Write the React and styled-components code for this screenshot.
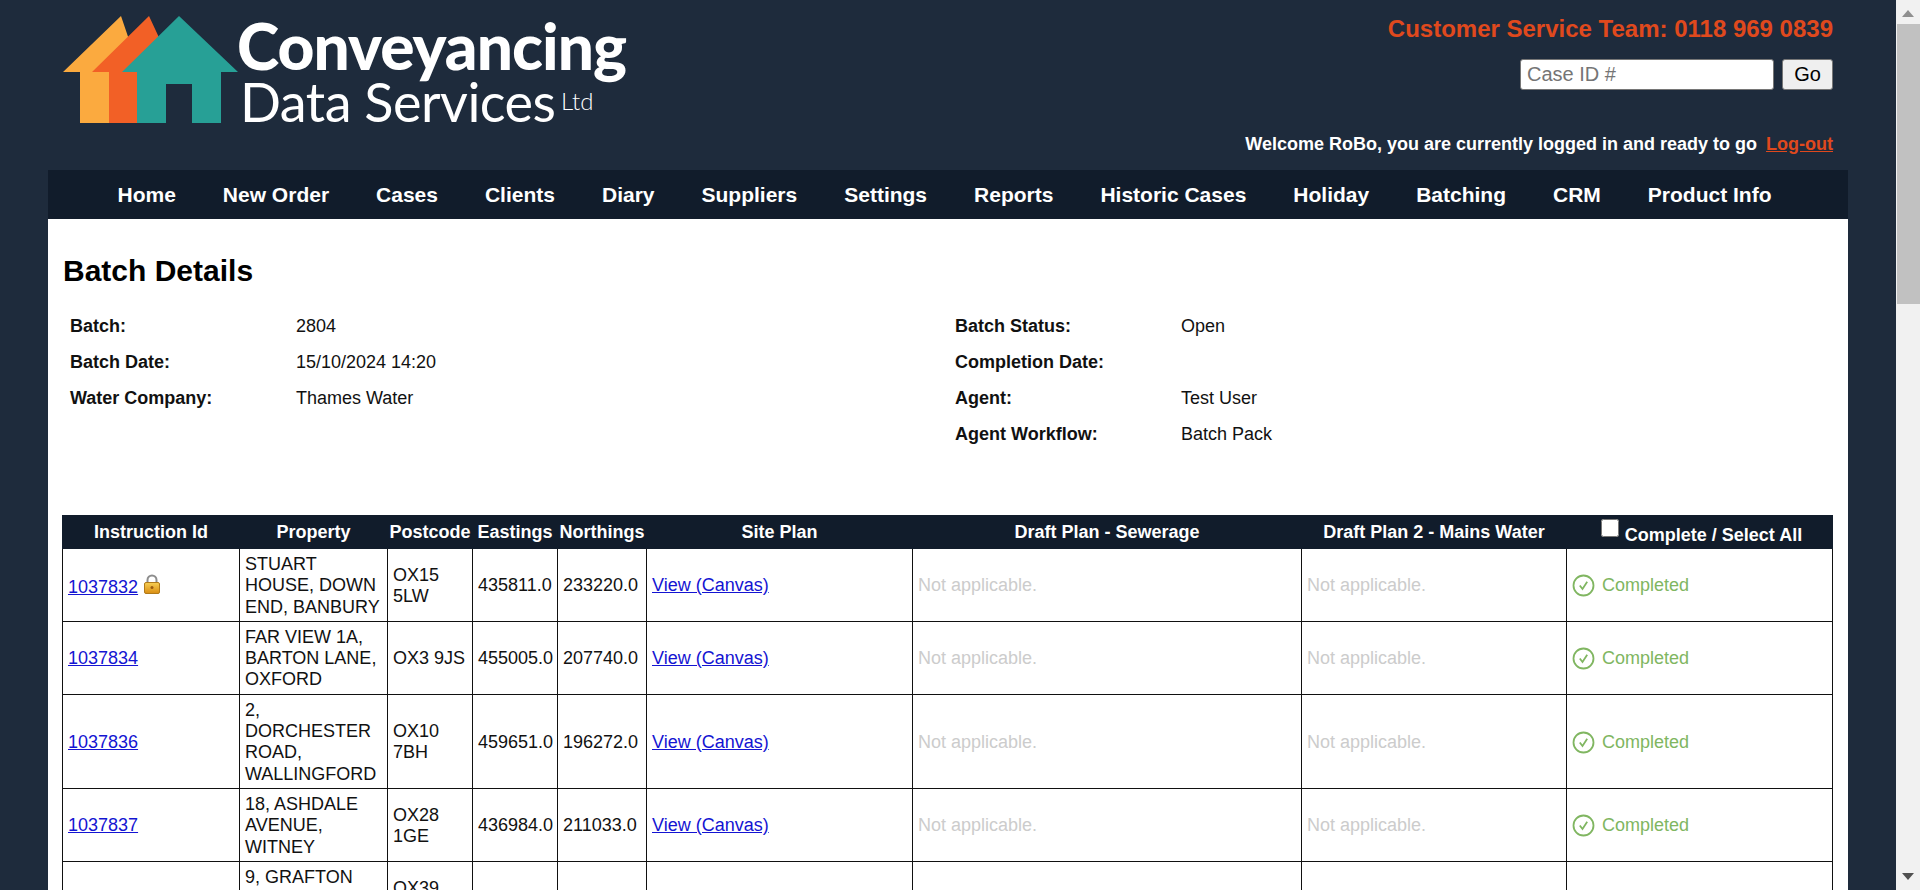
import React from "react";
import styled, { createGlobalStyle } from "styled-components";

const GlobalStyle = createGlobalStyle`
  body {
    margin: 0;
    background-color: #1e2b3c;
    font-family: "Liberation Sans", Arial, sans-serif;
    font-size: 18px;
    color: #111;
  }
`;

const Page = styled.div`
  width: 1800px;
  margin-left: 48px;
`;
const Header = styled.header`
  height: 170px;
  display: flex;
  justify-content: space-between;
  padding-right: 15px;
  box-sizing: border-box;
`;
const Logo = styled.svg`
  display: block;
  width: 580px;
  height: 140px;
  flex: none;
`;
const HeaderRight = styled.div`
  display: flex;
  flex-direction: column;
  align-items: flex-end;
`;
const Phone = styled.div`
  margin-top: 16px;
  font-size: 24px;
  line-height: 26px;
  font-weight: 700;
  color: #e0491d;
`;
const SearchForm = styled.form`
  display: flex;
  gap: 8px;
  margin-top: 17px;
`;
const SearchInput = styled.input`
  box-sizing: border-box;
  width: 254px;
  height: 31px;
  border: 1px solid #767676;
  border-radius: 3px;
  padding: 0 6px;
  font: 20px "Liberation Sans", Arial, sans-serif;
  &::placeholder {
    color: #757575;
  }
`;
const GoButton = styled.button`
  box-sizing: border-box;
  width: 51px;
  height: 31px;
  padding: 0;
  background: #efefef;
  border: 1px solid #767676;
  border-radius: 3px;
  font: 20px "Liberation Sans", Arial, sans-serif;
  color: #000;
`;
const Welcome = styled.div`
  margin-top: 44px;
  font-weight: 700;
  line-height: 21px;
  color: #fff;
  a {
    margin-left: 4px;
    color: #e0491d;
  }
`;
const Nav = styled.nav`
  height: 49px;
  background-color: #111c2b;
  display: flex;
  align-items: center;
  padding-left: 69.5px;
  gap: 47px;
`;
const NavLink = styled.a`
  color: #fff;
  font-size: 21px;
  font-weight: 700;
`;
const Panel = styled.main`
  background: #fff;
  min-height: 2500px;
  padding: 35px 15px 0;
`;
const Title = styled.h1`
  margin: 0 0 20px;
  font-size: 30px;
  line-height: 34px;
  font-weight: 700;
  color: #000;
`;
const DetailColumns = styled.div`
  display: grid;
  grid-template-columns: 1fr 1fr;
  height: 207px;
`;
const DetailList = styled.dl`
  margin: 0;
  padding-left: 7px;
  display: grid;
  grid-template-columns: 226px 1fr;
  grid-auto-rows: 36px;
  align-items: center;
  align-content: start;
  dt {
    font-weight: 700;
  }
  dd {
    margin: 0;
  }
`;
const Table = styled.table`
  width: 1770px;
  margin-left: -1px;
  table-layout: fixed;
  border-collapse: collapse;
  color: #111;
  th {
    background: #111c2b;
    border: 1px solid #111c2b;
    color: #fff;
    height: 32px;
    padding: 0;
    font-weight: 700;
    text-align: center;
    white-space: nowrap;
  }
  td {
    border: 1px solid #111;
    padding: 5px 5px 3px;
    line-height: 21.3px;
    vertical-align: middle;
    overflow: hidden;
  }
  a {
    color: #1414d2;
  }
`;
const SelectAllHead = styled.th`
  && {
    padding-left: 4px;
  }
`;
const SelectAll = styled.input`
  width: 18px;
  height: 18px;
  margin: 0 6px 0 0;
  vertical-align: 4px;
`;
const LockIcon = styled.svg`
  display: inline-block;
  width: 18px;
  height: 20px;
  margin-left: 5px;
  vertical-align: -1px;
`;
const NotApplicable = styled.span`
  color: #ccc;
`;
const Completed = styled.div`
  display: flex;
  align-items: center;
  gap: 7px;
  color: #80b661;
`;
const CheckIcon = styled.svg`
  display: block;
  width: 23px;
  height: 23px;
  flex: none;
`;
const Scrollbar = styled.div`
  position: fixed;
  top: 0;
  right: 0;
  bottom: 0;
  width: 24px;
  background: #f1f1f1;
  display: flex;
  flex-direction: column;
  align-items: center;
  justify-content: space-between;
`;
const ScrollArrow = styled.svg`
  display: block;
  flex: none;
  width: 12px;
  height: 7px;
  margin: 10px 0;
`;
const ScrollThumb = styled.div`
  position: absolute;
  top: 24px;
  left: 1px;
  right: 0;
  height: 280px;
  background: #c1c1c1;
`;

const navItems = [
  "Home",
  "New Order",
  "Cases",
  "Clients",
  "Diary",
  "Suppliers",
  "Settings",
  "Reports",
  "Historic Cases",
  "Holiday",
  "Batching",
  "CRM",
  "Product Info",
];

const leftDetails = [
  ["Batch:", "2804"],
  ["Batch Date:", "15/10/2024 14:20"],
  ["Water Company:", "Thames Water"],
];
const rightDetails = [
  ["Batch Status:", "Open"],
  ["Completion Date:", ""],
  ["Agent:", "Test User"],
  ["Agent Workflow:", "Batch Pack"],
];

const rows = [
  { id: "1037832", locked: true, property: "STUART HOUSE, DOWN END, BANBURY", postcode: "OX15 5LW", east: "435811.0", north: "233220.0" },
  { id: "1037834", property: "FAR VIEW 1A, BARTON LANE, OXFORD", postcode: "OX3 9JS", east: "455005.0", north: "207740.0" },
  { id: "1037836", property: "2, DORCHESTER ROAD, WALLINGFORD", postcode: "OX10 7BH", east: "459651.0", north: "196272.0" },
  { id: "1037837", property: "18, ASHDALE AVENUE, WITNEY", postcode: "OX28 1GE", east: "436984.0", north: "211033.0" },
  { id: "", property: "9, GRAFTON ORCHARD, CHINNOR", postcode: "OX39 4TZ", east: "", north: "", blank: true },
];

const columnWidths = [177, 148, 85, 85, 89, 266, 389, 265, 266];

const Houses = () => (
  <>
    <path fill="#fbaa3f" d="M121 16 L63 72 H80 V123 H109 V72 H140 Z" />
    <path fill="#f26026" d="M149 16 L92 72 H109 V123 H137 V72 H175 Z" />
    <path
      fill="#27a096"
      d="M179 16 L122 72 H137 V123 H166 V84 H192 V123 H221 V72 H238 Z"
    />
  </>
);

const Lock = () => (
  <LockIcon viewBox="0 0 18 20">
    <defs>
      <linearGradient id="lockBody" x1="0" y1="0" x2="0" y2="1">
        <stop offset="0" stopColor="#f7cf55" />
        <stop offset="1" stopColor="#d98d12" />
      </linearGradient>
    </defs>
    <path d="M4.5 9 V6 a4.5 4.5 0 0 1 9 0 V9" fill="none" stroke="#8d8d8d" strokeWidth="2" />
    <rect x="1.5" y="8.5" width="15" height="11" rx="1.5" fill="url(#lockBody)" stroke="#b07a1a" />
    <circle cx="9" cy="13.5" r="1.5" fill="#9a5a10" />
  </LockIcon>
);

const Check = () => (
  <CheckIcon viewBox="0 0 23 23">
    <circle cx="11.5" cy="11.5" r="10" fill="none" stroke="#80b661" strokeWidth="1.8" />
    <path d="M7.8 11.5 L10.5 15 L15.2 7.8" fill="none" stroke="#80b661" strokeWidth="1.8" />
  </CheckIcon>
);

const App = () => {
  return (
    <>
      <GlobalStyle />
      <Page>
        <Header>
          <Logo viewBox="48 0 580 140">
            <Houses />
            <text x="237" y="69.5" fontFamily="Lato, sans-serif" fontWeight="900" fontSize="64" fill="#fff" textLength="390">
              Conveyancing
            </text>
            <text x="240" y="122" fontFamily="Lato, sans-serif" fontWeight="400" fontSize="54" fill="#fff" textLength="316">
              Data Services
            </text>
            <text x="561" y="110" fontFamily="Lato, sans-serif" fontWeight="300" fontSize="24" fill="#fff">
              Ltd
            </text>
          </Logo>
          <HeaderRight>
            <Phone>Customer Service Team: 0118 969 0839</Phone>
            <SearchForm>
              <SearchInput type="text" placeholder="Case ID #" />
              <GoButton type="button">Go</GoButton>
            </SearchForm>
            <Welcome>
              Welcome RoBo, you are currently logged in and ready to go <a href="#logout">Log-out</a>
            </Welcome>
          </HeaderRight>
        </Header>
        <Nav>
          {navItems.map((item) => (
            <NavLink key={item}>{item}</NavLink>
          ))}
        </Nav>
        <Panel>
          <Title>Batch Details</Title>
          <DetailColumns>
            <DetailList>
              {leftDetails.map(([label, value]) => (
                <React.Fragment key={label}>
                  <dt>{label}</dt>
                  <dd>{value}</dd>
                </React.Fragment>
              ))}
            </DetailList>
            <DetailList>
              {rightDetails.map(([label, value]) => (
                <React.Fragment key={label}>
                  <dt>{label}</dt>
                  <dd>{value}</dd>
                </React.Fragment>
              ))}
            </DetailList>
          </DetailColumns>
          <Table>
            <colgroup>
              {columnWidths.map((w, i) => (
                <col key={i} width={w} />
              ))}
            </colgroup>
            <thead>
              <tr>
                <th>Instruction Id</th>
                <th>Property</th>
                <th>Postcode</th>
                <th>Eastings</th>
                <th>Northings</th>
                <th>Site Plan</th>
                <th>Draft Plan - Sewerage</th>
                <th>Draft Plan 2 - Mains Water</th>
                <SelectAllHead>
                  <SelectAll type="checkbox" />
                  Complete / Select All
                </SelectAllHead>
              </tr>
            </thead>
            <tbody>
              {rows.map((row) => (
                <tr key={row.property}>
                  <td>
                    <a href="#case">{row.id}</a>
                    {row.locked && <Lock />}
                  </td>
                  <td>{row.property}</td>
                  <td>{row.postcode}</td>
                  <td>{row.east}</td>
                  <td>{row.north}</td>
                  <td>{!row.blank && <a href="#canvas">View (Canvas)</a>}</td>
                  <td>{!row.blank && <NotApplicable>Not applicable.</NotApplicable>}</td>
                  <td>{!row.blank && <NotApplicable>Not applicable.</NotApplicable>}</td>
                  <td>
                    {!row.blank && (
                      <Completed>
                        <Check />
                        Completed
                      </Completed>
                    )}
                  </td>
                </tr>
              ))}
            </tbody>
          </Table>
        </Panel>
      </Page>
      <Scrollbar>
        <ScrollArrow viewBox="0 0 12 7">
          <path d="M6 0 L12 7 H0 Z" fill="#8f8f8f" />
        </ScrollArrow>
        <ScrollThumb />
        <ScrollArrow viewBox="0 0 12 7">
          <path d="M0 0 H12 L6 7 Z" fill="#505050" />
        </ScrollArrow>
      </Scrollbar>
    </>
  );
};

export default App;
